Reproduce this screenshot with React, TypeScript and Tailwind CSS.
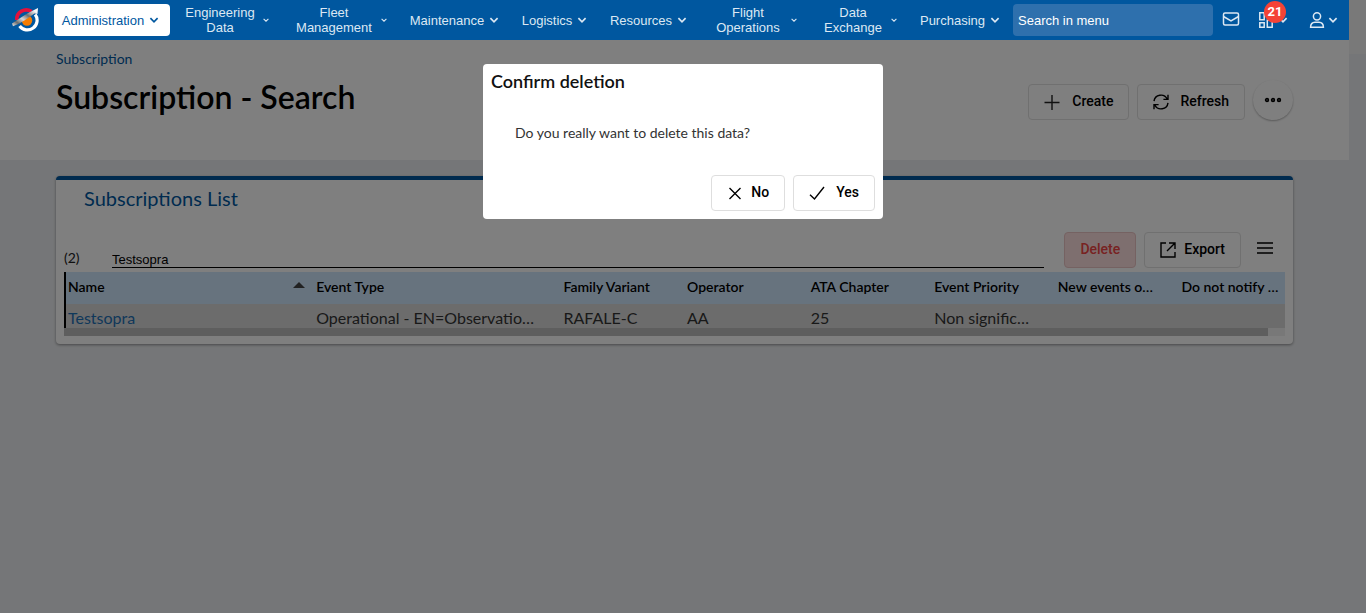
import type { ReactNode } from "react";

const Chevron = ({ small }: { small?: boolean }) => (
  <svg
    viewBox="0 0 10 10"
    className={small ? "size-2 shrink-0" : "size-3 shrink-0"}
    fill="none"
    stroke="currentColor"
    strokeWidth="1.4"
    aria-hidden="true"
  >
    <path d="M2 3.5 5 6.5 8 3.5" />
  </svg>
);

const menus = [
  { label: "Administration", width: "w-[116px]", active: true },
  { label: "Engineering Data", width: "w-[106px]", wrap: true },
  { label: "Fleet Management", width: "w-[114px]", wrap: true },
  { label: "Maintenance", width: "w-[108px]" },
  { label: "Logistics", width: "w-[84px]" },
  { label: "Resources", width: "w-[96px]" },
  { label: "Flight Operations", width: "w-[106px]", wrap: true },
  { label: "Data Exchange", width: "w-[96px]", wrap: true },
  { label: "Purchasing", width: "w-[99px]" },
];

const Logo = () => (
  <svg viewBox="0 0 28 28" className="size-7" aria-hidden="true">
    <defs>
      <linearGradient id="wing" x1="0" y1="1" x2="1" y2="0">
        <stop offset="0" stopColor="#f0f0f0" />
        <stop offset="0.2" stopColor="#6b6b6b" />
        <stop offset="0.4" stopColor="#d5d5d5" />
        <stop offset="0.6" stopColor="#6f6f6f" />
        <stop offset="0.85" stopColor="#f5f5f5" />
        <stop offset="1" stopColor="#fff" />
      </linearGradient>
    </defs>
    <circle cx="16" cy="14.5" r="5.2" fill="#f57c00" />
    <path d="M5.8 14 A9.4 9.4 0 0 1 20.5 5.6" fill="none" stroke="#e4113c" strokeWidth="3.6" />
    <path d="M24.2 8.5 A9.6 9.6 0 1 1 8.6 20" fill="none" stroke="#fff" strokeWidth="3.2" />
    <path d="M1 17.5 C8 13 15 7.5 22 4.5 L27 2 L26.5 8 L23.5 7.5 C17 12 10 17.5 2 20.3Z" fill="url(#wing)" />
  </svg>
);

function Button({ children, className = "" }: { children: ReactNode; className?: string }) {
  return (
    <button
      type="button"
      className={`flex h-9 items-center rounded-[4px] border pb-[2px] font-[Roboto,sans-serif] text-sm font-medium ${className}`}
    >
      {children}
    </button>
  );
}

const Header = () => (
  <header className="relative z-20 flex h-10 items-center bg-[#00579f] pr-2 pl-[11px] font-['Liberation_Sans',sans-serif] text-[13px] leading-[15px] text-[#dce8f3]">
    <a href="#home" aria-label="Home" className="mr-[15px]">
      <Logo />
    </a>
    <nav aria-label="Main" className="flex items-center gap-1">
      {menus.map((m) => (
        <button
          key={m.label}
          type="button"
          className={`flex h-8 items-center gap-[2px] rounded-[4px] pr-[10px] pl-[6px] ${m.width} ${
            m.active ? "bg-white text-[#00579f]" : ""
          }`}
        >
          <span className="min-w-0 flex-1 text-center">{m.label}</span>
          <Chevron small={m.wrap} />
        </button>
      ))}
    </nav>
    <input
      type="text"
      aria-label="Search in menu"
      placeholder="Search in menu"
      className="ml-[2px] h-8 w-[200px] rounded-[4px] bg-[#2e70ad] px-[5px] text-white placeholder:text-white"
    />
    <button type="button" aria-label="Messages" className="ml-[9px]">
      <svg viewBox="0 0 18 16" className="h-4 w-[18px]" fill="none" stroke="currentColor" strokeWidth="1.5" aria-hidden="true">
        <rect x="1.5" y="1" width="15" height="12" rx="1.5" />
        <path d="M1.5 4.5 9 9 16.5 4.5" />
      </svg>
    </button>
    <button type="button" aria-label="Notifications" className="relative ml-[19px] flex items-center gap-[2px]">
      <svg viewBox="0 0 16 16" className="size-4" fill="none" stroke="currentColor" strokeWidth="1.5" aria-hidden="true">
        <path d="M.8.8h4.4v7H.8zM.8 10.8h4.4v4.4H.8zM8.3.8h4.9v4.4H8.3zM8.3 8.2h4.9v7H8.3z" />
      </svg>
      <Chevron />
      <span className="absolute -top-[11px] left-[5px] flex size-[22px] items-center justify-center rounded-full bg-[#f44336] pb-px font-[Roboto,sans-serif] text-[13px] font-bold text-white">
        21
      </span>
    </button>
    <button type="button" aria-label="Account" className="ml-5 flex items-center gap-[2px]">
      <svg viewBox="0 0 16 18" className="h-[18px] w-4" fill="none" stroke="currentColor" strokeWidth="1.5" aria-hidden="true">
        <circle cx="8" cy="5.3" r="3.6" />
        <path d="M1.6 16.2c0-3 2-4.9 4.4-5h4c2.4.1 4.4 2 4.4 5z" />
      </svg>
      <Chevron />
    </button>
  </header>
);

const columns = [
  { title: "Name", value: "Testsopra", width: "w-[20%]" },
  { title: "Event Type", value: "Operational - EN=Observatio…", width: "w-[20%]" },
  { title: "Family Variant", value: "RAFALE-C", width: "w-[10%]" },
  { title: "Operator", value: "AA", width: "w-[10%]" },
  { title: "ATA Chapter", value: "25", width: "w-[10%]" },
  { title: "Event Priority", value: "Non signific…", width: "w-[10%]" },
  { title: "New events o…", value: "", width: "w-[10%]" },
  { title: "Do not notify …", value: "", width: "w-[10%]" },
];

const List = () => (
  <section className="mx-14 mt-4 rounded-[4px] border-t-4 border-[#00579f] bg-white px-2 pb-2 shadow-[0_1px_3px_rgba(0,0,0,0.4)]">
    <h2 className="pt-1 pl-5 text-xl leading-[28px] text-[#00579f]">Subscriptions List</h2>
    <div className="mt-5 flex h-10 items-start">
      <span className="w-12 pt-4 text-sm text-[#222]">(2)</span>
      <input
        type="text"
        aria-label="Filter by name"
        defaultValue="Testsopra"
        className="mt-[19px] h-[17px] min-w-0 flex-1 border-b border-black bg-transparent font-['Liberation_Sans',sans-serif] text-[13px] leading-4 text-black"
      />
      <Button className="ml-5 border-[#ebc4c4] bg-[#fcdfdf] px-[15px] text-[#f04444]">Delete</Button>
      <Button className="ml-2 gap-2 border-[#e0e0e0] px-[15px] text-black">
        <svg viewBox="0 0 16 16" className="size-4 translate-y-px" fill="none" stroke="currentColor" strokeWidth="1.4" aria-hidden="true">
          <path d="M6 1H1v14h14v-5M9 1h6v6M15 1 7 9" />
        </svg>
        Export
      </Button>
      <button type="button" aria-label="List options" className="mr-3 ml-4 h-8">
        <svg viewBox="0 0 16 12" className="h-3 w-4" stroke="#000" strokeWidth="1.3" aria-hidden="true">
          <path d="M0 1h16M0 6h16M0 11h16" />
        </svg>
      </button>
    </div>
    <div className="h-14 overflow-hidden border-l-2 border-black">
      <table className="w-[101.4%] table-fixed border-collapse text-left whitespace-nowrap">
        <thead>
          <tr className="h-8 bg-[#cfe6fd] text-sm text-black">
            {columns.map((c, i) => (
              <th key={c.title} scope="col" className={`pt-0 pr-2 pb-[2px] font-semibold ${c.width} ${i ? "pl-[3px]" : "pl-[2px]"}`}>
                <span className="flex items-center justify-between">
                  {c.title}
                  {i === 0 && (
                    <svg viewBox="0 0 12 6" className="mb-1 h-[6px] w-3" aria-hidden="true">
                      <path d="M0 6 6 0 12 6z" fill="#444" />
                    </svg>
                  )}
                </span>
              </th>
            ))}
          </tr>
        </thead>
        <tbody>
          <tr className="h-[29px] bg-[#d8d8d8] text-base leading-5 text-[#333]">
            {columns.map((c, i) => (
              <td key={c.title} className={`pt-0 pb-[2px] ${i ? "pl-[3px]" : "pl-[2px]"}`}>
                {i === 0 ? (
                  <a href="#testsopra" className="text-[#1f70b5]">
                    {c.value}
                  </a>
                ) : (
                  c.value
                )}
              </td>
            ))}
          </tr>
        </tbody>
      </table>
    </div>
    <div className="h-2 bg-[#f0f0f0]">
      <div className="h-2 w-[98.6%] bg-[#bdbdbd]" />
    </div>
  </section>
);

const Dialog = () => (
  <div
    role="dialog"
    aria-modal="true"
    aria-labelledby="dialog-title"
    className="fixed top-16 left-1/2 z-30 w-[400px] -translate-x-1/2 rounded-[4px] bg-white px-2 pb-2 text-[#111]"
  >
    <h2 id="dialog-title" className="pt-1 text-lg leading-[26px] font-semibold">
      Confirm deletion
    </h2>
    <p className="px-6 pt-[29px] pb-8 text-sm leading-5 text-[#333]">Do you really want to delete this data?</p>
    <div className="flex justify-end gap-2">
      <Button className="gap-2 border-[#dedede] px-[15px] text-black">
        <svg viewBox="0 0 16 16" className="size-4 translate-y-px" stroke="#000" strokeWidth="1.4" aria-hidden="true">
          <path d="m2.5 3 11 11m0-11-11 11" />
        </svg>
        No
      </Button>
      <Button className="gap-[11px] border-[#dedede] px-[15px] text-black">
        <svg viewBox="0 0 16 16" className="size-4 translate-y-px" fill="none" stroke="#000" strokeWidth="1.4" aria-hidden="true">
          <path d="M1 9.8 5.5 14 15 2" />
        </svg>
        Yes
      </Button>
    </div>
  </div>
);

export default function App() {
  return (
    <div className="flex min-h-screen bg-[#ebedf0] font-[Lato,sans-serif]">
      <div className="min-w-0 flex-1">
        <Header />
        <div className="flex h-30 justify-between bg-white px-14">
          <div>
            <a href="#subscription" className="mt-[9px] block text-sm leading-5 text-[#00579f]">
              Subscription
            </a>
            <h1 className="mt-2 text-[32px] leading-10 font-semibold text-black">Subscription - Search</h1>
          </div>
          <div className="mt-11 flex items-start gap-2">
            <Button className="gap-3 border-[#e0e0e0] px-[15px] text-black">
              <svg viewBox="0 0 16 16" className="size-4 translate-y-px" stroke="#222" strokeWidth="1.4" aria-hidden="true">
                <path d="M8 1v15M.5 8.5h15" />
              </svg>
              Create
            </Button>
            <Button className="gap-[11px] border-[#e0e0e0] px-[15px] text-black">
              <svg viewBox="0 0 16 16" className="size-4 translate-y-px" fill="none" stroke="#000" strokeWidth="1.4" aria-hidden="true">
                <path d="M1 7.2A7 7 0 0 1 14.2 5M15 .8V5.4h-4.6M15 8.8A7 7 0 0 1 1.8 11M1 15.2v-4.6h4.6" />
              </svg>
              Refresh
            </Button>
            <button
              type="button"
              aria-label="More actions"
              className="-mt-1 flex size-10 items-center justify-center rounded-full shadow-[0_1px_2px_rgba(0,0,0,0.3)]"
            >
              <svg viewBox="0 0 18 6" className="h-[6px] w-[18px]" fill="#777" stroke="#000" strokeWidth="1.4" aria-hidden="true">
                <circle cx="3" cy="3" r="1.5" />
                <circle cx="9" cy="3" r="1.5" />
                <circle cx="15" cy="3" r="1.5" />
              </svg>
            </button>
          </div>
        </div>
        <List />
      </div>
      <div className="w-[17px] shrink-0" aria-hidden="true">
        <div className="h-[54px] bg-[#f3f3f3]" />
      </div>
      <div className="fixed inset-0 z-10 bg-black/50" />
      <Dialog />
    </div>
  );
}
